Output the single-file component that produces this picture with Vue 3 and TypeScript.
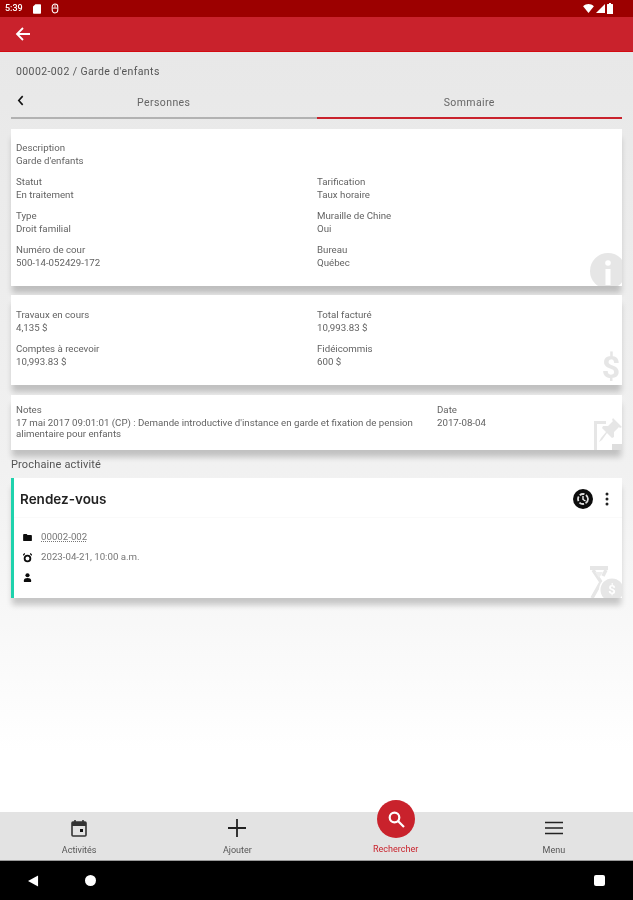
<script setup lang="ts">
interface Field {
  label: string;
  value: string;
}

const infoFields: Field[] = [
  { label: 'Statut', value: 'En traitement' },
  { label: 'Tarification', value: 'Taux horaire' },
  { label: 'Type', value: 'Droit familial' },
  { label: 'Muraille de Chine', value: 'Oui' },
  { label: 'Numéro de cour', value: '500-14-052429-172' },
  { label: 'Bureau', value: 'Québec' },
];

const moneyFields: Field[] = [
  { label: 'Travaux en cours', value: '4,135 $' },
  { label: 'Total facturé', value: '10,993.83 $' },
  { label: 'Comptes à recevoir', value: '10,993.83 $' },
  { label: 'Fidéicommis', value: '600 $' },
];
</script>

<template>
  <div class="screen">
    <div class="status-bar">
      <span class="time">5:39</span>
      <svg class="st-icon" viewBox="0 0 10 12" width="8" height="10"><path d="M3 0h6a1 1 0 0 1 1 1v10a1 1 0 0 1-1 1H1a1 1 0 0 1-1-1V3z" fill="#fff" /></svg>
      <svg class="st-icon" viewBox="0 0 10 12" width="8" height="11"><path d="M5 .5a3.500 3.500 0 0 1 3.500 3.500v4a3.500 3.500 0 0 1-7 0V4A3.500 3.500 0 0 1 5 .5z" fill="none" stroke="#fff" stroke-width="1.300" /><path d="M2 5.500h6" stroke="#fff" stroke-width="1.200" /><path d="M5 1v4" stroke="#fff" /></svg>
      <span class="st-spacer"></span>
      <svg viewBox="0 0 12 10" width="11" height="9"><path d="M0 2.500C3.500-.8 8.500-.8 12 2.500L6 10z" fill="#fff" /></svg>
      <svg viewBox="0 0 10 10" width="9" height="9"><path d="M10 0v10H0z" fill="#fff" /></svg>
      <svg viewBox="0 0 6 11" width="6" height="11"><path d="M2 0h2v1h1.500a.5.500 0 0 1 .5.500V11H0V1.500A.5.500 0 0 1 .5 1H2z" fill="#fff" /></svg>
    </div>

    <header class="app-bar">
      <svg viewBox="0 0 16 16" width="16" height="16"><path d="M15 8H2M8 2 2 8l6 6" fill="none" stroke="#fff" stroke-width="1.800" /></svg>
    </header>

    <main class="content">
      <div class="title">00002-002 / Garde d'enfants</div>

      <div class="tabs">
        <svg class="tab-back" viewBox="0 0 8 12" width="7" height="11"><path d="M6.500 1 2 6l4.500 5" fill="none" stroke="#111" stroke-width="1.800" /></svg>
        <div class="tab">Personnes</div>
        <div class="tab active">Sommaire</div>
      </div>

      <section class="card card-info">
        <div class="field description">
          <div>Description</div>
          <div>Garde d'enfants</div>
        </div>
        <div class="two-cols">
          <div v-for="f in infoFields" :key="f.label" class="field">
            <div>{{ f.label }}</div>
            <div>{{ f.value }}</div>
          </div>
        </div>
        <svg class="mark mark-info" viewBox="0 0 36 36" width="36" height="36">
          <circle cx="18" cy="18" r="18" fill="#e6e6e6" />
          <circle cx="18" cy="10" r="2.800" fill="#fff" />
          <rect x="15.500" y="16" width="5" height="16" fill="#fff" />
        </svg>
      </section>

      <section class="card card-money">
        <div class="two-cols">
          <div v-for="f in moneyFields" :key="f.label" class="field">
            <div>{{ f.label }}</div>
            <div>{{ f.value }}</div>
          </div>
        </div>
        <span class="mark mark-dollar">$</span>
      </section>

      <section class="card card-notes">
        <div class="field notes-text">
          <div>Notes</div>
          <div>17 mai 2017 09:01:01 (CP) : Demande introductive d'instance en garde et fixation de pension alimentaire pour enfants</div>
        </div>
        <div class="field">
          <div>Date</div>
          <div>2017-08-04</div>
        </div>
        <svg class="mark mark-pin" viewBox="0 0 32 32" width="32" height="32">
          <path d="M16 4.500H5.500V32" fill="none" stroke="#e6e6e6" stroke-width="3" />
          <path d="M23 0l9 9-2 1-1-1-5 5 0 5-2 1-5-5-5 7-3 2 2-4 5-6-4-4 1-2 5 0 5-5-1-1z" fill="#e6e6e6" />
          <rect x="22" y="26" width="10" height="6" fill="#dedede" />
        </svg>
      </section>

      <div class="next-label">Prochaine activité</div>

      <section class="card card-event">
        <div class="event-head">
          <span class="event-title">Rendez-vous</span>
          <svg class="event-badge" viewBox="0 0 20 20" width="20" height="20">
            <circle cx="10" cy="10" r="10" fill="#0c0c0c" />
            <circle cx="10" cy="10" r="5" fill="none" stroke="#ddd" stroke-width="1.800" stroke-dasharray="5 1.500" />
            <path d="M10 7v3.500l2.500 1.500" fill="none" stroke="#fff" stroke-width="1.300" />
          </svg>
          <svg class="kebab" viewBox="0 0 4 14" width="4" height="14">
            <circle cx="2" cy="2" r="1.500" fill="#222" />
            <circle cx="2" cy="7" r="1.500" fill="#222" />
            <circle cx="2" cy="12" r="1.500" fill="#222" />
          </svg>
        </div>
        <div class="event-rows">
          <div class="event-row">
            <svg viewBox="0 0 10 8" width="9" height="7"><path d="M0 1a1 1 0 0 1 1-1h3l1 1h4a1 1 0 0 1 1 1v5a1 1 0 0 1-1 1H1a1 1 0 0 1-1-1z" fill="#0c0c0c" /></svg>
            <span class="file-link">00002-002</span>
          </div>
          <div class="event-row">
            <svg viewBox="0 0 10 10" width="9" height="10"><circle cx="5" cy="5.500" r="3.200" fill="none" stroke="#0c0c0c" stroke-width="2" /><path d="M0 2 2 0M10 2 8 0" stroke="#0c0c0c" stroke-width="1.400" /></svg>
            <span>2023-04-21, 10:00 a.m.</span>
          </div>
          <div class="event-row">
            <svg viewBox="0 0 10 10" width="9" height="9"><circle cx="5" cy="2.500" r="2.300" fill="#0c0c0c" /><path d="M1 10V8c0-1.500 2-2.500 4-2.500S9 6.500 9 8v2z" fill="#0c0c0c" /></svg>
          </div>
        </div>
        <svg class="mark mark-time" viewBox="0 0 32 34" width="32" height="34">
          <path d="M0 2h18v4H0z" fill="#e6e6e6" />
          <path d="M3 6l8 12-9 16M16 6l-3 6" fill="none" stroke="#e6e6e6" stroke-width="3.500" />
          <path d="M5 8h8l-4 6z" fill="#eeeeee" />
          <circle cx="22" cy="26" r="13" fill="#fff" />
          <circle cx="22" cy="26" r="11.500" fill="#e6e6e6" />
          <text x="22" y="30" text-anchor="middle" class="mark-time-text">$</text>
        </svg>
      </section>
    </main>

    <nav class="bottom-nav">
      <div class="nav-item">
        <svg class="nav-icon" viewBox="0 0 18 18" width="18" height="18">
          <path d="M3 3h12a1 1 0 0 1 1 1v12a1 1 0 0 1-1 1H3a1 1 0 0 1-1-1V4a1 1 0 0 1 1-1z" fill="none" stroke="#333" stroke-width="1.600" />
          <path d="M2 3h14v4H2z" fill="#333" />
          <path d="M5 1v3M13 1v3" stroke="#333" stroke-width="1.600" />
          <rect x="10" y="10" width="3" height="3" fill="#111" />
        </svg>
        <span>Activités</span>
      </div>
      <div class="nav-item">
        <svg class="nav-icon" viewBox="0 0 18 18" width="18" height="18"><path d="M9 0v18M0 9h18" stroke="#222" stroke-width="1.800" /></svg>
        <span>Ajouter</span>
      </div>
      <div class="nav-item search">
        <span class="search-btn">
          <svg viewBox="0 0 18 18" width="18" height="18"><circle cx="7.500" cy="7.500" r="4.800" fill="none" stroke="#fff" stroke-width="2.200" /><path d="M11 11l6 6" stroke="#fff" stroke-width="2.200" /></svg>
        </span>
        <span>Rechercher</span>
      </div>
      <div class="nav-item">
        <svg class="nav-icon" viewBox="0 0 18 18" width="18" height="18"><path d="M0 3.500h18M0 9h18M0 14.500h18" stroke="#222" stroke-width="1.700" /></svg>
        <span>Menu</span>
      </div>
    </nav>

    <div class="system-bar">
      <svg class="sys-back" viewBox="0 0 12 12" width="11" height="12"><path d="M11 0v12L0 6z" fill="#fff" /></svg>
      <span class="sys-home"></span>
      <span class="sys-spacer"></span>
      <span class="sys-recent"></span>
    </div>
  </div>
</template>

<style scoped>
.screen {
  width: 633px;
  height: 900px;
  display: flex;
  flex-direction: column;
  overflow: hidden;
  font-family: Roboto, "Liberation Sans", sans-serif;
  font-size: 9.700px;
  line-height: 12.500px;
  color: #555;
  filter: blur(0.4px);
}

.status-bar {
  height: 17px;
  flex: none;
  background: #9c0000;
  display: flex;
  align-items: center;
  gap: 2px;
  padding: 0 20px 0 5px;
  box-sizing: border-box;
}

.time {
  color: #fff;
  font-size: 9px;
  font-weight: 500;
  margin-right: 8px;
}

.st-icon {
  margin-right: 8px;
}

.st-spacer {
  flex: 1;
}

.app-bar {
  height: 35px;
  flex: none;
  box-sizing: border-box;
  background: #c9222c;
  border-bottom: 1px solid #d40a12;
  display: flex;
  align-items: center;
  padding-left: 15px;
}

.content {
  flex: 1;
  padding: 0 11px;
  background: linear-gradient(#e8e8e8 0, #f1f1f1 55%, #f8f8f8 75%, #fff 92%);
}

.title {
  margin-top: 13px;
  padding-left: 5px;
  font-size: 10.500px;
  line-height: 14px;
  letter-spacing: 0.400px;
  color: #555;
}

.tabs {
  position: relative;
  display: flex;
  height: 31px;
  margin-top: 9px;
}

.tab-back {
  position: absolute;
  left: 6px;
  top: 7px;
}

.tab {
  flex: 1;
  box-sizing: border-box;
  height: 31px;
  padding-top: 9px;
  text-align: center;
  font-size: 10.500px;
  letter-spacing: 0.400px;
  color: #666;
  border-bottom: 2px solid #b2b2b2;
}

.tab.active {
  border-bottom-color: #c9222c;
}

.card {
  position: relative;
  overflow: hidden;
  background: #fff;
  padding-left: 5px;
  box-shadow: 0 8px 6px -1px rgba(0, 0, 0, 0.2);
}

.card-info {
  margin-top: 10px;
  padding-top: 13px;
  padding-bottom: 17px;
}

.card-money {
  margin-top: 9px;
  padding-top: 14px;
  padding-bottom: 17px;
}

.card-notes {
  display: grid;
  grid-template-columns: 421px 1fr;
  margin-top: 10px;
  padding-top: 9px;
  padding-bottom: 10px;
}

.two-cols {
  display: grid;
  grid-template-columns: 301px 1fr;
  row-gap: 9px;
}

.description {
  margin-bottom: 9px;
}

.notes-text {
  width: 405px;
}

.notes-text div + div {
  line-height: 11.500px;
}

.field {
  color: #636363;
}

.mark {
  position: absolute;
}

.mark-info {
  right: -4px;
  bottom: -3px;
}

.mark-dollar {
  right: 2px;
  bottom: 0;
  font-size: 32px;
  line-height: 36px;
  font-weight: 700;
  color: #e6e6e6;
}

.mark-pin {
  right: 0;
  bottom: 0;
}

.mark-time {
  right: 0;
  bottom: 0;
}

.mark-time-text {
  font-size: 13px;
  font-weight: 700;
  fill: #fff;
}

.next-label {
  margin-top: 8px;
  font-size: 11px;
  line-height: 14px;
  letter-spacing: 0.150px;
  color: #555;
}

.card-event {
  margin-top: 6px;
  height: 120px;
  box-sizing: border-box;
  padding-left: 0;
  border-left: 3px solid #1fd2ad;
}

.event-head {
  height: 40px;
  display: flex;
  align-items: center;
  padding: 4px 13px 0 6px;
  border-bottom: 1px solid #fafafa;
  box-sizing: border-box;
}

.event-title {
  flex: 1;
  font-family: Inter, Roboto, sans-serif;
  font-size: 13.500px;
  font-weight: 600;
  color: #222;
}

.kebab {
  margin-left: 12px;
}

.event-rows {
  padding: 10px 0 0 9px;
}

.event-row {
  height: 20px;
  display: flex;
  align-items: center;
  gap: 9px;
  color: #777;
}

.event-row svg {
  flex: none;
}

.file-link {
  text-decoration: underline dotted;
}

.bottom-nav {
  height: 49px;
  flex: none;
  box-sizing: border-box;
  display: grid;
  grid-template-columns: repeat(4, 158.250px);
  background: #e3e3e3;
  border-bottom: 1px solid #9a9a9a;
}

.nav-item {
  display: flex;
  flex-direction: column;
  align-items: center;
  padding-top: 7px;
  font-size: 9px;
  line-height: 11px;
  color: #555;
}

.nav-icon {
  margin-bottom: 8px;
}

.search {
  color: #c9222c;
}

.search-btn {
  width: 38px;
  height: 38px;
  margin-top: -19px;
  margin-bottom: 6px;
  border-radius: 50%;
  background: #c9222c;
  display: flex;
  align-items: center;
  justify-content: center;
}

.system-bar {
  height: 39px;
  flex: none;
  background: #000;
  display: flex;
  align-items: center;
  padding: 0 28px;
  box-sizing: border-box;
}

.sys-home {
  width: 11px;
  height: 11px;
  margin-left: 46px;
  border-radius: 50%;
  background: #fff;
}

.sys-spacer {
  flex: 1;
}

.sys-recent {
  width: 11px;
  height: 11px;
  border-radius: 2px;
  background: #fff;
}
</style>
